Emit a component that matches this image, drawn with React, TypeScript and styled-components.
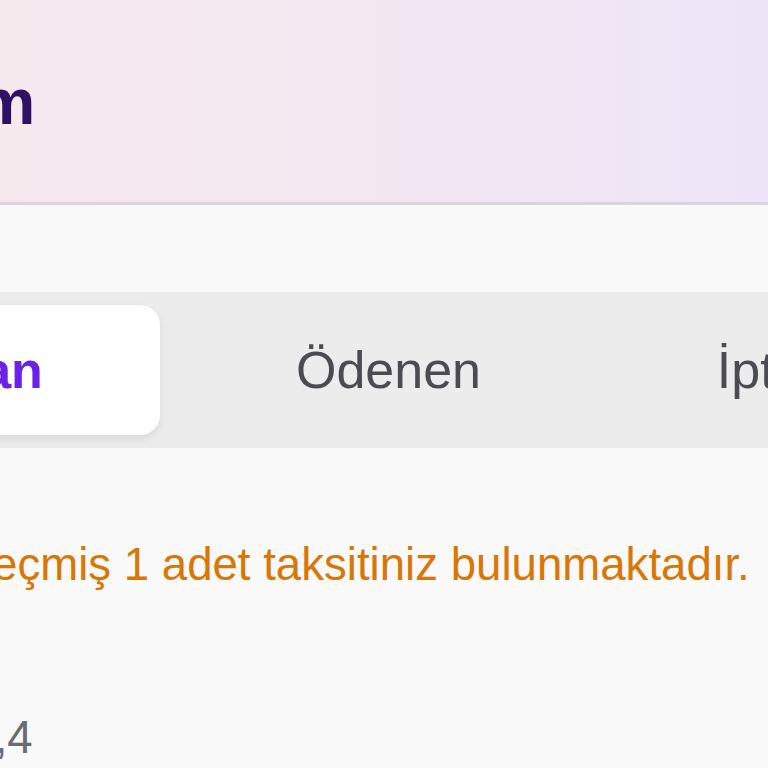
import React from 'react'
import styled, { createGlobalStyle } from 'styled-components'
import { AlertCircle } from 'lucide-react'

const GlobalStyle = createGlobalStyle`
  html, body {
    margin: 0;
    padding: 0;
    background: #f9f9f9;
    overflow: hidden;
  }
  body {
    font-family: "Liberation Sans", Arial, Helvetica, sans-serif;
  }
`

const tabs = ['Yaklaşan', 'Ödenen', 'İptal Edilen']

const App = () => {
  const active = 0
  return (
    <>
      <GlobalStyle />
      <Viewport>
        <Screen>
          <Header>
            <Title>Taksitlerim</Title>
          </Header>
          <Content>
            <TabBar>
              {tabs.map((t, i) => (
                <Tab key={t} active={i === active}>
                  {t}
                </Tab>
              ))}
            </TabBar>
            <Notice>
              <AlertCircle size={65} color="#d97706" strokeWidth={2} />
              <NoticeText>Vadesi geçmiş 1 adet taksitiniz bulunmaktadır.</NoticeText>
            </Notice>
            <AmountRow>Tutar: 1.250,4</AmountRow>
          </Content>
        </Screen>
      </Viewport>
    </>
  )
}

// the 768px window only shows a zoomed slice of a wide phone screen
const Viewport = styled.div`
  width: 768px;
  height: 768px;
  overflow: hidden;
`

const Screen = styled.div`
  width: 1501px;
  margin-left: -362px;
  min-height: 768px;
  background: #f9f9f9;
`

const Header = styled.header`
  height: 202px;
  display: flex;
  align-items: center;
  padding: 0 52px 0 59px;
  background: linear-gradient(
    90deg,
    #f8ebec 0%,
    #f6e9ee 24%,
    #f3e7f2 50%,
    #ede5f7 75%,
    #e9e2f9 100%
  );
  border-bottom: 3px solid #ddd3dc;
`

const Title = styled.h1`
  margin: 0;
  font-size: 65px;
  font-weight: 700;
  color: #2e1065;
`

const Content = styled.main`
  padding: 87px 52px 0;
  display: flex;
  flex-direction: column;
`

const TabBar = styled.nav`
  display: flex;
  padding: 13px;
  background: #ececec;
`

const Tab = styled.button<{ active?: boolean }>`
  flex: 1;
  height: 130px;
  border: none;
  border-radius: 20px;
  font-family: inherit;
  font-size: 52px;
  font-weight: ${(p) => (p.active ? 700 : 400)};
  color: ${(p) => (p.active ? '#6b21e8' : '#4b4b52')};
  background: ${(p) => (p.active ? '#ffffff' : 'transparent')};
  box-shadow: ${(p) => (p.active ? '0 4px 10px rgba(0, 0, 0, 0.08)' : 'none')};
  white-space: nowrap;
  cursor: pointer;
`

const Notice = styled.div`
  display: flex;
  align-items: center;
  gap: 26px;
  padding-left: 37px;
  margin-top: 84px;
`

const NoticeText = styled.p`
  margin: 0;
  font-size: 45.6px;
  color: #d97706;
  white-space: nowrap;
`

const AmountRow = styled.div`
  padding-left: 61px;
  margin-top: 115px;
  font-size: 45.5px;
  color: #6b6b73;
  white-space: nowrap;
`

export default App
